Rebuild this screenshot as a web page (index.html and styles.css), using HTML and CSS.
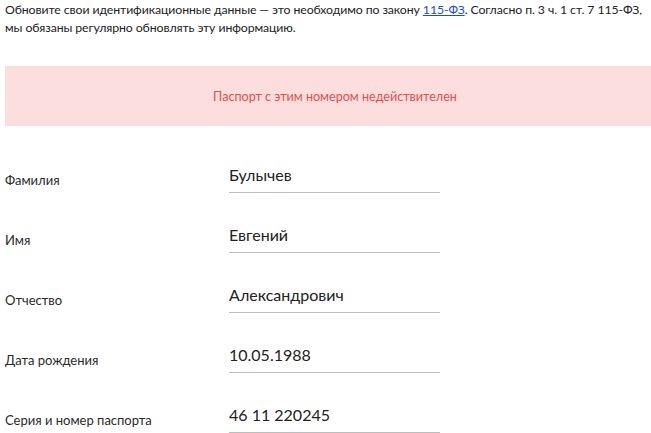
FILE: index.html
```html
<!DOCTYPE html>
<html>
<head>
    <meta name="viewport" content="width=device-width, initial-scale=1.0">
    <link rel="stylesheet" href="styles.css">
</head>
<body>
<p class="intro">Обновите свои идентификационные данные — это необходимо по закону <a href="#">115-ФЗ</a>. Согласно п. 3 ч. 1 ст. 7 115-ФЗ, мы обязаны регулярно обновлять эту информацию.</p>

<div class="alert">Паспорт с этим номером недействителен</div>

<form class="form">
    <div class="row">
        <label class="label" for="lastName">Фамилия</label>
        <input class="field" type="text" id="lastName" value="Булычев">
    </div>
    <div class="row">
        <label class="label" for="firstName">Имя</label>
        <input class="field" type="text" id="firstName" value="Евгений">
    </div>
    <div class="row">
        <label class="label" for="middleName">Отчество</label>
        <input class="field" type="text" id="middleName" value="Александрович">
    </div>
    <div class="row">
        <label class="label" for="birthDate">Дата рождения</label>
        <input class="field" type="text" id="birthDate" value="10.05.1988">
    </div>
    <div class="row">
        <label class="label" for="passport">Серия и номер паспорта</label>
        <input class="field" type="text" id="passport" value="46 11 220245">
    </div>
</form>
</body>
</html>
```

FILE: styles.css
```css
html {
    overflow: hidden;
}

body {
    font-family: Lato, "Open Sans", sans-serif;
    color: #222;
    width: 660px;
    margin: 0;
    padding: 0 0 0 5px;
}

.intro {
    max-width: 643px;
    font-size: 12.3px;
    letter-spacing: -0.1px;
    line-height: 18px;
    margin: 0;
    padding-top: 1px;
}

.intro a {
    color: #1a4fc4;
}

.alert {
    margin-top: 29px;
    height: 60px;
    background-color: #fddede;
    color: #e0504e;
    font-size: 12.6px;
    display: flex;
    justify-content: center;
    align-items: center;
}

.form {
    margin: 7px 0 0 0;
}

.row {
    height: 60px;
    display: flex;
    align-items: flex-end;
}

.label {
    width: 224px;
    flex-shrink: 0;
    font-size: 13px;
    line-height: 16px;
    color: #2a2a2a;
    padding-bottom: 5px;
}

.field {
    width: 211px;
    box-sizing: border-box;
    font-family: Lato, "Open Sans", sans-serif;
    font-size: 16px;
    color: #222;
    border: none;
    border-bottom: 1px solid #bdbdbd;
    padding: 0 0 6px 0;
    margin: 0;
    height: 30px;
    outline: none;
    background: transparent;
}
```
